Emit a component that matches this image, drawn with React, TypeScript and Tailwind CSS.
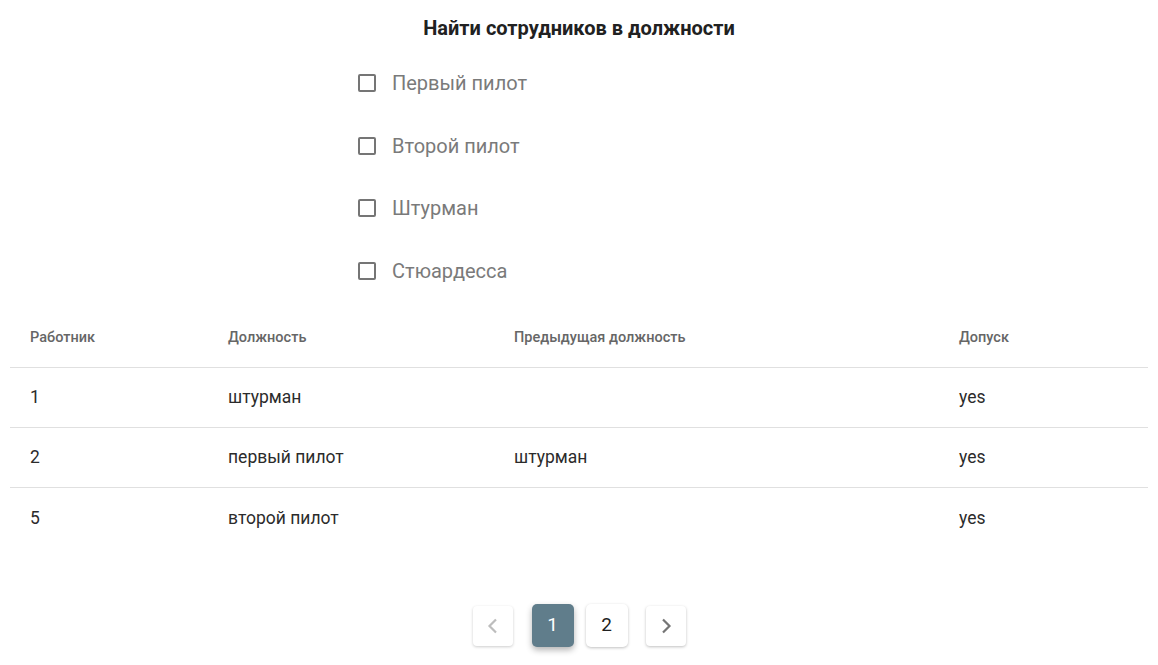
import { useState } from "react";

const positions = ["Первый пилот", "Второй пилот", "Штурман", "Стюардесса"];

const rows: { id: string; position: string; previous: string; access: string }[] = [
  { id: "1", position: "штурман", previous: "", access: "yes" },
  { id: "2", position: "первый пилот", previous: "штурман", access: "yes" },
  { id: "5", position: "второй пилот", previous: "", access: "yes" }
];

const cols = ["w-[198px]", "w-[286px]", "w-[445px]", "flex-1"];

export default function App() {
  const [checked, setChecked] = useState<string[]>([]);
  const [page, setPage] = useState(1);

  const toggle = (name: string) =>
    setChecked((prev) => (prev.includes(name) ? prev.filter((p) => p !== name) : [...prev, name]));

  return (
    <div className="min-h-[665px] bg-white font-['Roboto',sans-serif] text-[#212121]">
      <h1 className="pt-4 pb-3 text-center text-[20px] font-bold leading-6 text-[#212121]">
        Найти сотрудников в должности
      </h1>

      <div className="flex flex-col pl-[358px]">
        {positions.map((name) => (
          <label className="flex h-[62.5px] cursor-pointer items-center gap-4" key={name}>
            <span
              className={`flex h-[18px] w-[18px] items-center justify-center rounded-[2px] border-2 ${
                checked.includes(name) ? "border-[#607d8b] bg-[#607d8b]" : "border-[#757575]"
              }`}
              onClick={() => toggle(name)}
            >
              {checked.includes(name) ? (
                <svg viewBox="0 0 24 24" className="h-[14px] w-[14px]" fill="none" stroke="white" strokeWidth="3">
                  <path d="M5 12l5 5 9-10" />
                </svg>
              ) : null}
            </span>
            <span className="text-[20px] text-[#7a7a7a]">{name}</span>
          </label>
        ))}
      </div>

      <div className="mx-[10px] mt-[6px]">
        <div className="flex h-[60px] items-center border-b border-[#e0e0e0] text-[14.5px] font-medium text-[#666666]">
          {["Работник", "Должность", "Предыдущая должность", "Допуск"].map((h, i) => (
            <div className={`${cols[i]} pl-5`} key={h}>
              {h}
            </div>
          ))}
        </div>
        {rows.map((row, idx) => (
          <div
            className={`flex h-[60px] items-center text-[17.5px] text-[#2b2b2b] ${
              idx < rows.length - 1 ? "border-b border-[#e0e0e0]" : ""
            }`}
            key={row.id}
          >
            <div className={`${cols[0]} pl-5`}>{row.id}</div>
            <div className={`${cols[1]} pl-5`}>{row.position}</div>
            <div className={`${cols[2]} pl-5`}>{row.previous}</div>
            <div className={`${cols[3]} pl-5`}>{row.access}</div>
          </div>
        ))}
      </div>

      <div className="mt-[56px] flex items-center justify-center">
        <button
          className="flex h-10 w-10 items-center justify-center rounded-[4px] bg-white shadow-[0_1px_3px_rgba(0,0,0,0.2)]"
          onClick={() => setPage(Math.max(1, page - 1))}
        >
          <svg viewBox="0 0 24 24" className="h-6 w-6" fill="none" stroke="#bdbdbd" strokeWidth="2.2">
            <path d="M15 5.5l-6.5 6.5 6.5 6.5" />
          </svg>
        </button>
        {[1, 2].map((n) => (
          <button
            className={`flex h-[43px] w-[42px] items-center justify-center rounded-[5px] text-[19px] ${
              n === 1 ? "ml-[19px]" : "ml-3"
            } ${
              page === n
                ? "bg-[#607d8b] text-white shadow-[0_3px_6px_rgba(0,0,0,0.3)]"
                : "bg-white text-[#212121] shadow-[0_1px_3px_rgba(0,0,0,0.25)]"
            }`}
            key={n}
            onClick={() => setPage(n)}
          >
            {n}
          </button>
        ))}
        <button
          className="ml-[18px] flex h-10 w-10 items-center justify-center rounded-[4px] bg-white shadow-[0_1px_3px_rgba(0,0,0,0.25)]"
          onClick={() => setPage(Math.min(2, page + 1))}
        >
          <svg viewBox="0 0 24 24" className="h-6 w-6" fill="none" stroke="#757575" strokeWidth="2.2">
            <path d="M9 5.5l6.5 6.5-6.5 6.5" />
          </svg>
        </button>
      </div>
    </div>
  );
}
